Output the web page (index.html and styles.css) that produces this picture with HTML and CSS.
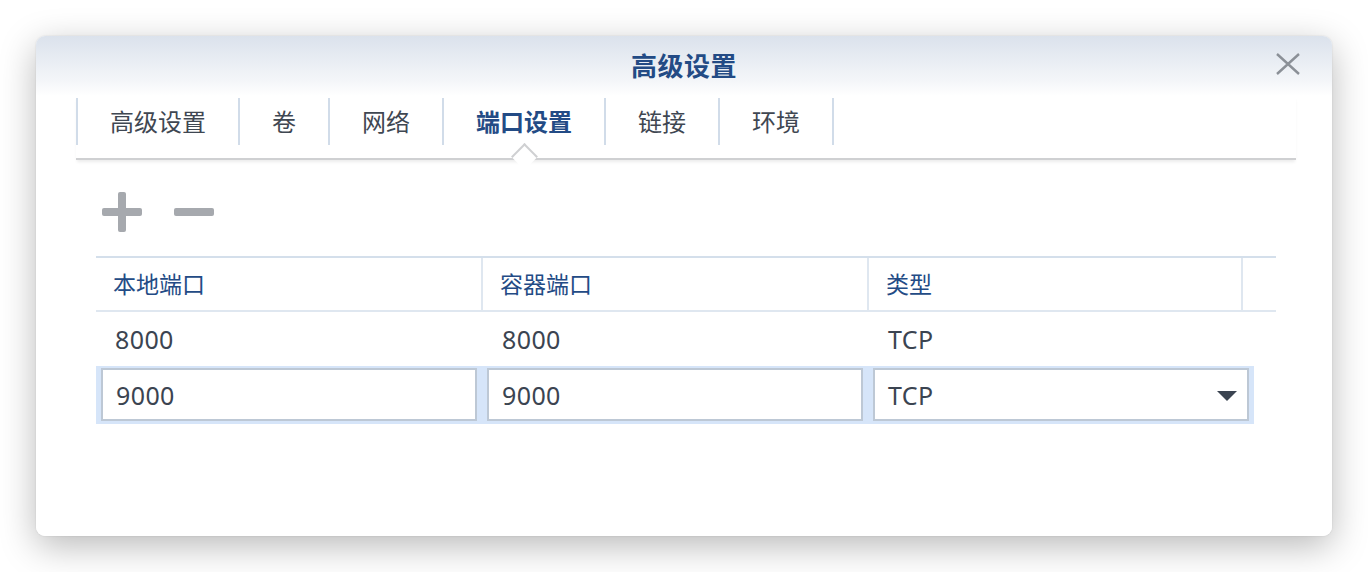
FILE: index.html
```html
<!DOCTYPE html>
<html lang="zh">
<head>
<meta charset="utf-8">
<title>高级设置</title>
<link rel="stylesheet" href="styles.css">
</head>
<body>
<div class="dialog">
  <div class="header">
    <div class="title">高级设置</div>
    <button class="close" aria-label="关闭">
      <svg width="26" height="22" viewBox="0 0 26 22"><path d="M2 1 L24 21 M24 1 L2 21" stroke="#8b9097" stroke-width="2.4" fill="none"/></svg>
    </button>
  </div>
  <div class="tabbar">
    <div class="tab">高级设置</div>
    <div class="tab">卷</div>
    <div class="tab">网络</div>
    <div class="tab active">端口设置</div>
    <div class="tab">链接</div>
    <div class="tab last">环境</div>
  </div>
  <div class="content">
    <div class="toolbar">
      <svg class="tool" width="40" height="40" viewBox="0 0 40 40"><rect x="0" y="16" width="40" height="8" rx="2" fill="#a6a9ae"/><rect x="16" y="0" width="8" height="40" rx="2" fill="#a6a9ae"/></svg>
      <svg class="tool" width="40" height="40" viewBox="0 0 40 40"><rect x="0" y="16" width="40" height="8" rx="2" fill="#a6a9ae"/></svg>
    </div>
    <div class="table">
      <div class="thead">
        <div class="th">本地端口</div>
        <div class="th">容器端口</div>
        <div class="th">类型</div>
        <div class="th filler"></div>
      </div>
      <div class="row">
        <div class="td">8000</div>
        <div class="td">8000</div>
        <div class="td">TCP</div>
      </div>
      <div class="editrow">
        <div class="input">9000</div>
        <div class="input">9000</div>
        <div class="input select">TCP<span class="arrow"></span></div>
      </div>
    </div>
  </div>
</div>
</body>
</html>
```
FILE: styles.css
```css
html, body {
  margin: 0;
  padding: 0;
  background: #ffffff;
}
body {
  padding: 36px;
  font-family: "Noto Sans", "Noto Sans CJK SC", sans-serif;
  color: #3b4451;
}
.dialog {
  position: relative;
  width: 1296px;
  height: 500px;
  border-radius: 9px;
  background: linear-gradient(#dbe2ec 0px, #f4f6f9 45px, #ffffff 60px, #ffffff 100%);
  box-shadow: 0 10px 36px rgba(0, 0, 0, 0.28), 0 0 2px rgba(0, 0, 0, 0.12);
}
.header {
  height: 58px;
  padding-bottom: 2px;
  display: flex;
  align-items: center;
  justify-content: center;
}
.title {
  font-size: 26px;
  font-weight: 700;
  color: #234b85;
  letter-spacing: 0.5px;
}
.close {
  position: absolute;
  top: 17px;
  right: 31px;
  border: 0;
  padding: 0;
  background: none;
  width: 26px;
  height: 22px;
}
.tabbar {
  position: relative;
  margin: 0 36px 0 40px;
  height: 60px;
  padding-top: 2px;
  display: flex;
  align-items: flex-start;
  border-bottom: 2px solid #cfd0d2;
  box-shadow: 0 3px 3px -1px rgba(0, 0, 0, 0.08);
}
.tab {
  position: relative;
  height: 47px;
  border-left: 2px solid #d1dce9;
  padding: 0 32px;
  font-size: 24px;
  line-height: 47px;
  color: #3f4752;
}
.tab.last {
  border-right: 2px solid #d1dce9;
}
.tab.active {
  font-weight: 700;
  color: #234b85;
}
.tab.active::after {
  content: "";
  position: absolute;
  left: 50%;
  bottom: -21px;
  width: 17px;
  height: 17px;
  margin-left: -9px;
  background: #ffffff;
  border-top: 2px solid #cfd0d2;
  border-left: 2px solid #cfd0d2;
  transform: rotate(45deg);
}
.content {
  padding: 32px 56px 0 60px;
}
.toolbar {
  display: flex;
  gap: 32px;
  padding-left: 6px;
  height: 40px;
}
.table {
  margin-top: 24px;
  width: 1180px;
}
.thead {
  display: grid;
  grid-template-columns: 387px 386px 374px 33px;
  border-top: 2px solid #d4dfeb;
  border-bottom: 2px solid #dfe7f0;
  height: 52px;
}
.th {
  border-right: 2px solid #dfe7f0;
  padding-left: 17px;
  font-size: 23px;
  line-height: 52px;
  color: #234b85;
}
.th.filler {
  border-right: 0;
}
.row {
  display: grid;
  grid-template-columns: 387px 386px 374px;
  height: 54px;
}
.td {
  padding-left: 19px;
  font-size: 25px;
  line-height: 55px;
  letter-spacing: 0.4px;
}
.editrow {
  display: flex;
  gap: 10px;
  width: 1148px;
  padding: 2px 5px 3px 5px;
  background: #d6e5f9;
}
.input {
  position: relative;
  width: 346px;
  height: 49px;
  border: 2px solid #bdc8d5;
  background: #ffffff;
  padding-left: 13px;
  padding-right: 13px;
  font-size: 25px;
  line-height: 50px;
  letter-spacing: 0.4px;
}
.arrow {
  position: absolute;
  right: 10px;
  top: 21px;
  width: 0;
  height: 0;
  border-left: 10px solid transparent;
  border-right: 10px solid transparent;
  border-top: 10px solid #3b4451;
}
```
